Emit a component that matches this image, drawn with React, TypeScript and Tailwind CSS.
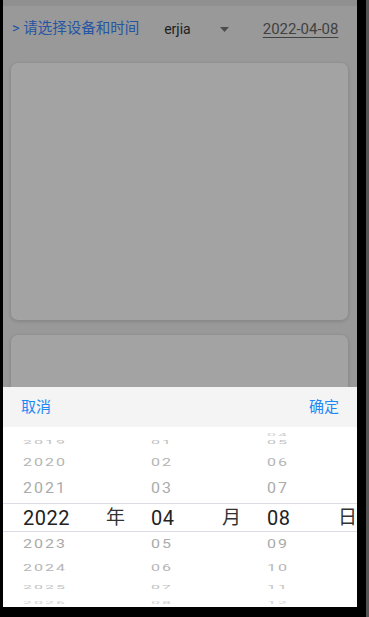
import React from 'react';

type Row = {
  h: string;
  scale: string;
  color: string;
  year: string;
  month: string;
  day: string;
  selected?: boolean;
};

// wheel rows, top to bottom; outer rows are squashed to fake the 3D drum
const rows: Row[] = [
  { h: 'h-[6px]', scale: 'scale-y-[0.18]', color: 'text-[#d0d0d0]', year: '', month: '', day: '04' },
  { h: 'h-[18px]', scale: 'scale-y-[0.38]', color: 'text-[#c2c2c2]', year: '2019', month: '01', day: '05' },
  { h: 'h-[23px]', scale: 'scale-y-[0.68]', color: 'text-[#b5b5b5]', year: '2020', month: '02', day: '06' },
  { h: 'h-[29px]', scale: 'scale-y-[0.9]', color: 'text-[#ababab]', year: '2021', month: '03', day: '07' },
  { h: 'h-[29px]', scale: 'scale-y-100', color: 'text-[#222]', year: '2022', month: '04', day: '08', selected: true },
  { h: 'h-[24px]', scale: 'scale-y-[0.85]', color: 'text-[#ababab]', year: '2023', month: '05', day: '09' },
  { h: 'h-[24px]', scale: 'scale-y-[0.6]', color: 'text-[#b5b5b5]', year: '2024', month: '06', day: '10' },
  { h: 'h-[15px]', scale: 'scale-y-[0.3]', color: 'text-[#c2c2c2]', year: '2025', month: '07', day: '11' },
  { h: 'h-[12px]', scale: 'scale-y-[0.22]', color: 'text-[#d0d0d0]', year: '2026', month: '08', day: '12' },
];

function WheelRow({ row }: { row: Row }) {
  const num = row.selected
    ? 'text-[20px] tracking-[0.5px]'
    : 'text-[16px] tracking-[2px]';
  return (
    <div
      className={`grid grid-cols-[83px_45px_71px_45px_71px_1fr] items-center pl-[20px] leading-none ${row.h} ${
        row.selected ? 'border-y border-[#dcdce4]' : ''
      }`}
    >
      <span className={`inline-block ${row.scale} ${row.color} ${num}`}>{row.year}</span>
      <span className="text-[19px] text-[#333]">{row.selected ? '年' : ''}</span>
      <span className={`inline-block ${row.scale} ${row.color} ${num}`}>{row.month}</span>
      <span className="text-[19px] text-[#333]">{row.selected ? '月' : ''}</span>
      <span className={`inline-block ${row.scale} ${row.color} ${num}`}>{row.day}</span>
      <span className="text-[19px] text-[#333]">{row.selected ? '日' : ''}</span>
    </div>
  );
}

export default function App() {
  return (
    <div className="flex h-[617px] w-[369px] bg-black font-['Roboto','Noto_Sans_CJK_SC',sans-serif]">
      <div className="ml-[3px] h-[607px] w-[354px] relative overflow-hidden bg-[#f0f0f0]">
        {/* page underneath */}
        <div className="h-[6px] bg-[#e2e2e2]" />
        <div className="flex h-[46px] items-center pl-[9px] text-[14px]">
          <span className="text-[#3a85ff] text-[14.5px]">&gt; 请选择设备和时间</span>
          <span className="ml-[25px] text-[#333]">erjia</span>
          <svg className="ml-[29px]" width="9" height="5" viewBox="0 0 9 5">
            <path d="M0 0h9L4.5 5z" fill="#777" />
          </svg>
          <span className="ml-[34px] text-[15px] text-[#666] underline underline-offset-[3px]">2022-04-08</span>
        </div>
        <div className="ml-[8px] mr-[9px] mt-[11px] h-[257px] rounded-[7px] bg-white shadow-[0_1px_4px_rgba(0,0,0,0.18)]" />
        <div className="ml-[8px] mr-[9px] mt-[15px] h-[257px] rounded-[7px] bg-white shadow-[0_1px_4px_rgba(0,0,0,0.18)]" />

        {/* mask */}
        <div className="absolute inset-0 bg-black/[0.36]" />

        {/* date picker sheet */}
        <div className="absolute bottom-0 left-0 right-0 bg-white">
          <div className="flex h-[40px] items-center justify-between bg-[#f4f4f4] px-[18px] text-[15px] text-[#1e88f5]">
            <span>取消</span>
            <span>确定</span>
          </div>
          <div className="h-[180px] overflow-hidden">
            {rows.map((r, i) => (
              <WheelRow key={i} row={r} />
            ))}
          </div>
        </div>
      </div>
      <div className="ml-auto h-full w-[3px] bg-[#555]" />
    </div>
  );
}
